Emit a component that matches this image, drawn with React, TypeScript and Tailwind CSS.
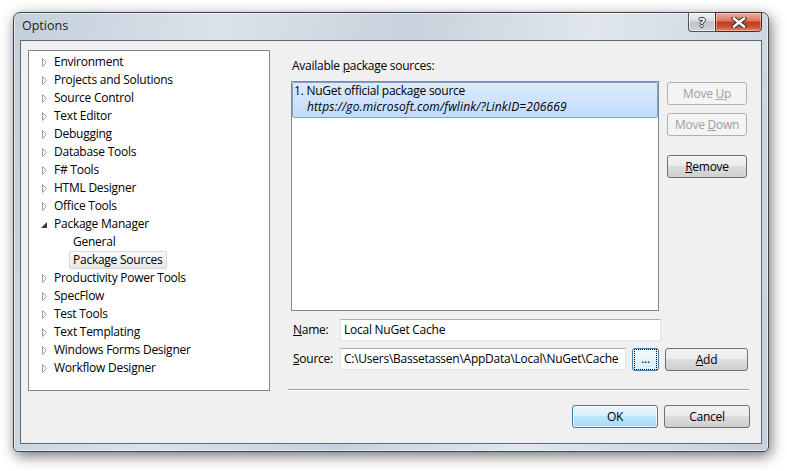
import type { ReactNode } from "react";

type TreeItem = {
	label: string;
	kind: "collapsed" | "expanded" | "child";
	selected?: boolean;
};

const treeItems: TreeItem[] = [
	{ label: "Environment", kind: "collapsed" },
	{ label: "Projects and Solutions", kind: "collapsed" },
	{ label: "Source Control", kind: "collapsed" },
	{ label: "Text Editor", kind: "collapsed" },
	{ label: "Debugging", kind: "collapsed" },
	{ label: "Database Tools", kind: "collapsed" },
	{ label: "F# Tools", kind: "collapsed" },
	{ label: "HTML Designer", kind: "collapsed" },
	{ label: "Office Tools", kind: "collapsed" },
	{ label: "Package Manager", kind: "expanded" },
	{ label: "General", kind: "child" },
	{ label: "Package Sources", kind: "child", selected: true },
	{ label: "Productivity Power Tools", kind: "collapsed" },
	{ label: "SpecFlow", kind: "collapsed" },
	{ label: "Test Tools", kind: "collapsed" },
	{ label: "Text Templating", kind: "collapsed" },
	{ label: "Windows Forms Designer", kind: "collapsed" },
	{ label: "Workflow Designer", kind: "collapsed" },
];

function Arrow({ open }: { open: boolean }) {
	if (open) {
		return (
			<svg width="7" height="9" viewBox="0 0 7 9" className="ml-[1px]">
				<path d="M6 2 L6 8 L0 8 Z" fill="#3c3c3c" />
			</svg>
		);
	}
	return (
		<svg width="7" height="9" viewBox="0 0 7 9" className="ml-[1px]">
			<path d="M1.5 0.5 L5.5 4.5 L1.5 8.5 Z" fill="#fff" stroke="#a0a0a0" />
		</svg>
	);
}

function Tree() {
	return (
		<div className="w-[242px] h-[341px] border border-[#828790] bg-white pt-[2px]">
			{treeItems.map((item) => (
				<div key={item.label} className="h-[18px] flex items-center">
					{item.kind === "child" ? (
						<div
							className={
								item.selected
									? "ml-[40px] h-[18px] px-[3px] flex items-center rounded-[2px] border border-[#d9d9d9] bg-gradient-to-b from-[#fafafa] to-[#e6e6e6]"
									: "ml-[40px] h-[18px] px-[3px] flex items-center border border-transparent"
							}
						>
							{item.label}
						</div>
					) : (
						<>
							<div className="w-[25px] pl-[11px] flex items-center">
								<Arrow open={item.kind === "expanded"} />
							</div>
							<span>{item.label}</span>
						</>
					)}
				</div>
			))}
		</div>
	);
}

function Btn({
	children,
	className,
	disabled,
	primary,
	focused,
}: {
	children: ReactNode;
	className: string;
	disabled?: boolean;
	primary?: boolean;
	focused?: boolean;
}) {
	let look =
		"border-[#707070] text-black bg-[linear-gradient(#f2f2f2_0%,#ebebeb_49%,#dddddd_50%,#cfcfcf_100%)]";
	if (disabled) {
		look = "border-[#adb2b5] text-[#a0a0a0] bg-[#f4f4f4]";
	}
	if (primary) {
		look =
			"border-[#3c7fb1] text-black bg-[linear-gradient(#eaf6fd_0%,#d9f0fc_49%,#bee6fd_50%,#a7d9f5_100%)] shadow-[inset_0_0_0_1px_rgba(255,255,255,0.7)]";
	}
	if (focused) {
		look =
			"border-[#3c7fb1] text-black bg-[linear-gradient(#f4fafe_0%,#eef7fd_49%,#e4f3fc_50%,#dcf0fb_100%)]";
	}
	return (
		<div
			className={`h-[23px] rounded-[3px] border flex items-center justify-center ${look} ${className}`}
		>
			{focused ? (
				<div className="w-full h-full m-[1px] border border-dotted border-black flex items-center justify-center leading-none pb-[2px]">
					{children}
				</div>
			) : (
				children
			)}
		</div>
	);
}

function Input({ value, className }: { value: string; className: string }) {
	return (
		<div
			className={`h-[22px] bg-white border border-[#e2e3ea] border-t-[#abadb3] pl-[3px] flex items-center whitespace-nowrap overflow-hidden ${className}`}
		>
			{value}
		</div>
	);
}

function CaptionButtons() {
	return (
		<div className="flex self-start -mt-px">
			<div className="w-[27px] h-[20px] border border-[#4b5561] border-r-0 rounded-bl-[4px] bg-[linear-gradient(#eef0f2_0%,#d9dde2_45%,#bcc3cb_50%,#cdd3d9_100%)] flex items-center justify-center shadow-[inset_0_0_0_1px_rgba(255,255,255,0.6)]">
				<span className="text-white font-bold text-[13px] leading-none [text-shadow:1px_0_0_#333,-1px_0_0_#333,0_1px_0_#333,0_-1px_0_#333]">
					?
				</span>
			</div>
			<div className="w-[47px] h-[20px] border border-[#4b2a24] rounded-br-[4px] bg-[linear-gradient(#eab0a2_0%,#d9755e_45%,#c4381b_50%,#d0563c_80%,#e08c72_100%)] flex items-center justify-center shadow-[inset_0_0_0_1px_rgba(255,255,255,0.35)]">
				<svg width="16" height="11" viewBox="0 0 16 11">
					<path d="M3 1.5 L13 9.5 M13 1.5 L3 9.5" stroke="#3a2a28" strokeWidth="4.5" strokeLinecap="square" />
					<path d="M3 1.5 L13 9.5 M13 1.5 L3 9.5" stroke="#fff" strokeWidth="2.5" strokeLinecap="square" />
				</svg>
			</div>
		</div>
	);
}

export default function App() {
	return (
		<div className="w-[787px] h-[471px] bg-white overflow-hidden pl-[13px] pt-[12px] font-['Open_Sans',sans-serif] text-[12px] tracking-[-0.25px] text-black">
			<div className="w-[756px] h-[440px] flex flex-col rounded-t-[7px] rounded-b-[5px] border border-[#3b4551] bg-[linear-gradient(100deg,#c3cfdb_0%,#dbe2e9_25%,#c8d2dc_48%,#e0e6ec_70%,#c6d0da_100%)] shadow-[2px_4px_14px_rgba(0,0,0,0.55),inset_0_0_0_1px_rgba(255,255,255,0.55)]">
				<div className="h-[27px] flex items-center justify-between pl-[8px] pr-[6px]">
					<span className="text-[12.5px] tracking-normal text-[#1b1b1b] pb-[1px]">Options</span>
					<CaptionButtons />
				</div>
				<div className="mx-[6px] h-[404px] border border-[#5d6874] bg-[#f0f0f0] flex pl-[7px] pt-[9px]">
					<Tree />
					<div className="w-[462px] ml-[18px] flex flex-col">
						<div className="h-[31px] pt-[8px] pl-[4px] leading-[16px]">
							Available <span className="underline">p</span>ackage sources:
						</div>
						<div className="h-[230px] flex">
							<div className="ml-[3px] w-[368px] h-[230px] border border-[#828790] bg-white">
								<div className="h-[36px] rounded-[2px] border border-[#7da2ce] bg-gradient-to-b from-[#dcebfc] to-[#c1dbfc] pl-[1px] leading-[16px]">
									<div>1. NuGet official package source</div>
									<div className="pl-[13px] italic tracking-[0.12px]">
										https://go.microsoft.com/fwlink/?LinkID=206669
									</div>
								</div>
							</div>
							<div className="ml-[8px] mt-[1px] flex flex-col">
								<Btn disabled className="w-[80px]">
									<span>
										Move <span className="underline">U</span>p
									</span>
								</Btn>
								<Btn disabled className="w-[80px] mt-[8px]">
									<span>
										Move <span className="underline">D</span>own
									</span>
								</Btn>
								<Btn className="w-[80px] mt-[19px]">
									<span>
										<span className="underline">R</span>emove
									</span>
								</Btn>
							</div>
						</div>
						<div className="mt-[8px] flex items-center">
							<div className="w-[52px] pl-[5px]">
								<span className="underline">N</span>ame:
							</div>
							<Input value="Local NuGet Cache" className="w-[321px]" />
						</div>
						<div className="mt-[7px] flex items-start">
							<div className="w-[52px] pl-[5px] h-[22px] flex items-center">
								<span>
									<span className="underline">S</span>ource:
								</span>
							</div>
							<Input
								value="C:\Users\Bassetassen\AppData\Local\NuGet\Cache"
								className="w-[286px]"
							/>
							<Btn focused className="w-[27px] ml-[6px]">
								...
							</Btn>
							<Btn className="w-[83px] ml-[6px]">
								<span>
									<span className="underline">A</span>dd
								</span>
							</Btn>
						</div>
						<div className="mt-[18px] mr-[1px] border-t border-[#a0a0a0] border-b border-b-white" />
						<div className="mt-[14px] flex justify-end">
							<Btn primary className="w-[86px]">
								OK
							</Btn>
							<Btn className="w-[86px] ml-[6px]">Cancel</Btn>
						</div>
					</div>
				</div>
			</div>
		</div>
	);
}
